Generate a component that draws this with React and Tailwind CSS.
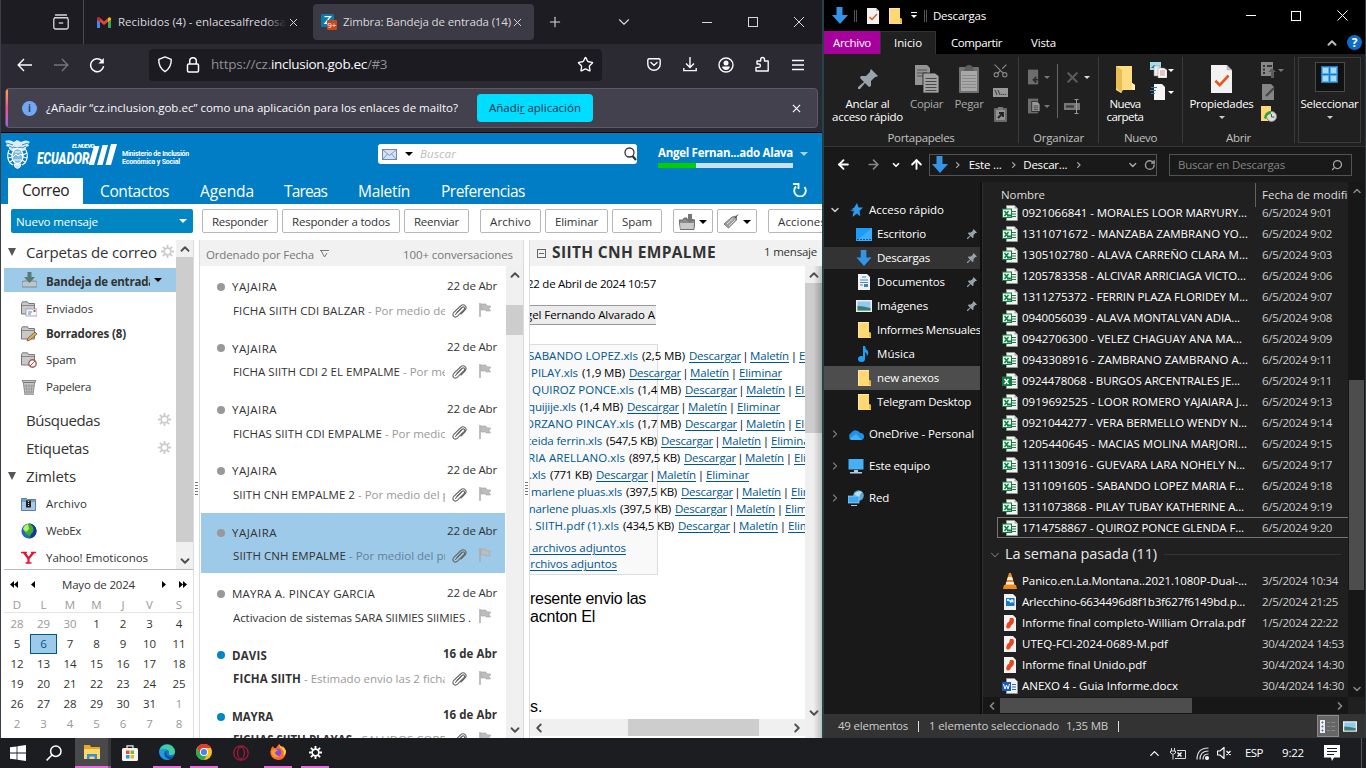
import React, { useLayoutEffect, useRef } from "react";
import { X, Plus, ChevronDown, ChevronUp, ChevronLeft, ChevronRight, ArrowLeft, ArrowRight, ArrowUp, RotateCw, Star, Search, Scissors } from "lucide-react";

/* One-line label whose tracking is adjusted so that it spans w pixels. */
function T({ w, className = "", children }) {
  const ref = useRef(null);
  useLayoutEffect(() => {
    const el = ref.current;
    if (!w || !el) return;
    el.style.letterSpacing = "0px";
    const n = el.textContent.length;
    el.style.letterSpacing = (w - el.getBoundingClientRect().width) / n + "px";
  }, [w, children]);
  return <span ref={ref} className={"inline-block shrink-0 whitespace-pre " + className}>{children}</span>;
}

const Tri = ({ className = "" }) => (
  <svg viewBox="0 0 8 4" className={"h-1 w-2 shrink-0 " + className}><path d="M0 0h8L4 4z" fill="currentColor" /></svg>
);
const SmallTri = ({ className = "" }) => (
  <svg viewBox="0 0 6 3" className={"h-[3px] w-[6px] shrink-0 " + className}><path d="M0 0h6L3 3z" fill="currentColor" /></svg>
);
const TreeTri = () => (
  <svg viewBox="0 0 8 8" className="ml-1 h-2 w-2 shrink-0"><path d="M0 0h8L4 8z" fill="#555" /></svg>
);
const Gear = ({ className = "" }) => (
  <svg viewBox="0 0 14 14" className={"shrink-0 " + className} fill="none" stroke="currentColor">
    <circle cx="7" cy="7" r="3.6" strokeWidth="1.8" />
    <path d="M7 0v3M7 11v3M0 7h3M11 7h3M2 2l2.200 2.200M9.800 9.800L12 12M12 2L9.800 4.200M4.200 9.800L2 12" strokeWidth="2" />
  </svg>
);

const DownArrow = ({ className = "" }) => (
  <svg viewBox="0 0 16 17" className={"h-[17px] w-4 shrink-0 " + className}><path d="M4.500 0h6v8H16l-8 9-8-9h4.500z" fill="#3495e8" /></svg>
);
const FolderIcon = ({ className = "" }) => (
  <svg viewBox="0 0 13 16" className={"h-4 w-[13px] shrink-0 " + className}>
    <path d="M0 0h11v10l2 1v5H0z" fill="#ffd874" /><path d="M0 0h11v1H1v14H0z" fill="#ffe9a8" /><path d="M11 10l2 1v4h-2z" fill="#e8b73c" />
  </svg>
);
const Pin = ({ className = "h-[11px] w-[11px]" }) => (
  <svg viewBox="0 0 20 20" className={"shrink-0 " + className}><path d="M13 0l7 7-2 1-1 0-4 4 0 5-2 1-4-4-5 6-2 0 0-2 6-5-4-4 1-2 5 0 4-4 0-1z" fill="#98a3ad" /></svg>
);

/* ---------- browser window ---------- */

function BrowserTabs() {
  return (
    <div className="flex h-11 shrink-0 items-center bg-[#1d1c23] text-[11.5px] text-[#d8d8dc]">
      <svg viewBox="0 0 16 16" className="ml-[52px] h-4 w-4 shrink-0" fill="none" stroke="#d8d8dc" strokeWidth="1.3">
        <path d="M2.500 1h11" strokeLinecap="round" /><path d="M1.200 3.700h13.600" /><rect x=".8" y="3.700" width="14.400" height="11.300" rx="1.800" /><path d="M5.800 9h4.400" />
      </svg>
      <div className="ml-[14px] h-11 w-px bg-[#4a4953]" />
      <svg viewBox="0 0 14 11" className="ml-[13px] h-[11px] w-[14px] shrink-0">
        <path d="M0 1v10h3V4z" fill="#4285f4" /><path d="M14 1v10h-3V4z" fill="#34a853" /><path d="M0 1.400Q.6-.3 2.400.6L7 4.400 11 1v3.800L7 8 3 4.800 0 2.600z" fill="#ea4335" /><path d="M11 1q2-1.700 3 .4v1.200l-3 2.300z" fill="#fbbc04" /><path d="M0 1.400Q.6-.3 3 1v3.800L0 2.600z" fill="#c5221f" />
      </svg>
      <div className="relative ml-[7px] w-[168px] overflow-hidden py-1">
        <T w={168}>Recibidos (4) - enlacesalfredosa</T>
        <div className="absolute inset-y-0 right-0 w-5 bg-linear-to-r from-[#1d1c23]/0 to-[#1d1c23]" />
      </div>
      <X className="ml-px h-[13px] w-[13px] shrink-0" strokeWidth={1.800} />
      <div className="ml-[13px] flex h-9 w-[221px] shrink-0 items-center rounded bg-[#3b3a45]">
        <svg viewBox="0 0 16 16" className="ml-2 h-4 w-4 shrink-0">
          <rect width="13" height="13" rx="1.500" fill="#0f79aa" /><path d="M3.500 2.700h6L4 9.300h3" fill="none" stroke="#dff" strokeWidth="1.300" />
          <rect x="6" y="6" width="10" height="10" rx="1" fill="#c3481c" />
          <text x="6.300" y="14" fontSize="8" fontFamily="Open Sans, sans-serif" fill="#fff">9+</text>
        </svg>
        <T w={168} className="ml-[6px]">Zimbra: Bandeja de entrada (14)</T>
        <X className="h-[13px] w-[13px] shrink-0" strokeWidth={1.800} />
      </div>
      <Plus className="ml-[13px] h-4 w-4 shrink-0" strokeWidth={1.600} />
      <ChevronDown className="ml-[52px] h-[18px] w-[18px] shrink-0" strokeWidth={1.500} />
      <div className="ml-[69px] h-px w-[10px] shrink-0 bg-[#d8d8dc]" />
      <div className="ml-9 h-[10px] w-[10px] shrink-0 border border-[#d8d8dc]" />
      <svg viewBox="0 0 10 10" className="ml-9 h-[10px] w-[10px] shrink-0" stroke="#d8d8dc"><path d="M0 0l10 10M10 0L0 10" /></svg>
    </div>
  );
}

function BrowserToolbar() {
  return (
    <div className="flex h-11 shrink-0 items-center bg-[#2b2a33] pb-[3px] text-[#fbfbfe]">
      <svg viewBox="0 0 16 14" className="ml-4 h-[14px] w-4 shrink-0" fill="none" stroke="#fbfbfe" strokeWidth="1.400"><path d="M15 7H1.500M7 1L1.200 7 7 13" /></svg>
      <svg viewBox="0 0 16 14" className="ml-5 h-[14px] w-4 shrink-0" fill="none" stroke="#75747c" strokeWidth="1.400"><path d="M1 7h13.500M9 1l5.800 6L9 13" /></svg>
      <svg viewBox="0 0 16 16" className="ml-5 h-4 w-4 shrink-0" fill="none" stroke="#fbfbfe" strokeWidth="1.500"><path d="M14.600 9.200A6.500 6.500 0 1 1 12.800 3.600" /><path d="M14.800 1v5.400H9.400z" fill="#fbfbfe" stroke="none" /></svg>
      <div className="ml-11 flex h-8 w-[453px] shrink-0 items-center rounded bg-[#1c1b22]">
        <svg viewBox="0 0 16 18" className="ml-2 h-[17px] w-4 shrink-0" fill="none" stroke="#fbfbfe" strokeWidth="1.500"><path d="M8 1L14.600 3.600Q15 12 8 16.600 1 12 1.400 3.600z" strokeLinejoin="round" /></svg>
        <svg viewBox="0 0 14 16" className="ml-[13px] h-4 w-[14px] shrink-0" fill="none" stroke="#fbfbfe" strokeWidth="1.500"><rect x="1.500" y="7" width="11" height="8" rx="1.200" /><path d="M3.700 7V4a3.300 3.300 0 0 1 6.600 0v3" /></svg>
        <div className="ml-[11px] flex text-[13.5px] text-[#8f8f96]">
          <T w={60}>https://cz.</T><T w={96} className="text-[#fbfbfe]">inclusion.gob.ec</T><T w={20}>/#3</T>
        </div>
        <Star className="ml-[190px] h-[17px] w-[17px] shrink-0" strokeWidth={1.900} />
      </div>
      <svg viewBox="0 0 14 13" className="ml-[45px] h-[13px] w-[14px] shrink-0" fill="none" stroke="#fbfbfe" strokeWidth="1.400"><path d="M2.200.8h9.600q1.400 0 1.400 1.400v4a6.200 6 0 0 1-12.400 0v-4Q.8.8 2.200.8z" /><path d="M4 4.600l3 2.800 3-2.800" strokeLinecap="round" /></svg>
      <svg viewBox="0 0 14 15" className="ml-[22px] h-[15px] w-[14px] shrink-0" fill="none" stroke="#fbfbfe" strokeWidth="1.400"><path d="M7 0v10M3 6.400l4 4 4-4M.8 11v2.600h12.400V11" /></svg>
      <svg viewBox="0 0 16 16" className="ml-[21px] h-4 w-4 shrink-0"><circle cx="8" cy="8" r="7" fill="none" stroke="#fbfbfe" strokeWidth="1.400" /><circle cx="8" cy="6" r="2.500" fill="#fbfbfe" /><path d="M4 9.500h8q-.6 3.400-4 3.500-3.400-.1-4-3.500z" fill="#fbfbfe" /></svg>
      <svg viewBox="0 0 14 16" className="-mt-[2px] ml-[21px] h-4 w-[14px] shrink-0" fill="none" stroke="#fbfbfe" strokeWidth="1.400" strokeLinejoin="round"><path d="M1 15h12.200V5H9.500V3.400a1.900 1.900 0 0 0-3.800 0V5H2v3h1.700a1.600 1.600 0 0 1 0 3.400H1z" /></svg>
      <svg viewBox="0 0 12 12" className="ml-[23px] h-3 w-3 shrink-0" stroke="#fbfbfe" strokeWidth="1.300"><path d="M0 1.500h12M0 6h12M0 10.500h12" /></svg>
    </div>
  );
}

function Notice() {
  return (
    <div className="h-[45px] shrink-0 border-b border-black bg-[#2b2a33] pr-[4px] pl-1">
      <div className="flex h-10 items-center overflow-hidden rounded border border-[#5b5a66] bg-[#42414d] text-[11.5px] text-[#fbfbfe]">
        <div className="h-10 w-[2px] shrink-0 bg-linear-to-b from-[#ffa436] via-[#ff3f8e] to-[#9059ff]" />
        <div className="ml-[14px] flex h-[15px] w-[15px] shrink-0 items-center justify-center rounded-full bg-[#73a7f3] text-[10px] font-bold text-[#33475f]">i</div>
        <T w={412} className="ml-[9px]">¿Añadir “cz.inclusion.gob.ec” como una aplicación para los enlaces de mailto?</T>
        <div className="ml-[19px] flex h-7 w-[116px] shrink-0 items-center justify-center rounded bg-[#00ddff] text-[#15304a]">
          <T w={92}>Añadi<u>r</u> aplicación</T>
        </div>
        <svg viewBox="0 0 10 10" className="ml-[199px] h-[9px] w-[9px]" stroke="#fbfbfe" strokeWidth="1.300"><path d="M1 1l8 8M9 1L1 9" /></svg>
      </div>
    </div>
  );
}

function Crest() {
  return (
    <svg viewBox="0 0 27 30" className="h-[30px] w-[27px] shrink-0" fill="none" stroke="#fff">
      <path d="M1 2q5-2 9 1l3-2 4 2q5-3 9 0l-2 2 1 2-3 1v3l-3 1H8L5 10V8L2 7l1-2z" fill="#dcedf8" stroke="none" />
      <path d="M3 4l6 2M24 4l-6 2M9 8l4 1 5-1M5 7l4 2M22 7l-4 2" stroke="#0a7abd" strokeWidth=".8" />
      <ellipse cx="13.500" cy="17" rx="5.500" ry="7.500" fill="#7bbbe2" strokeWidth="1.300" /><path d="M9 18l3-3 2 2 3-2 2 3M10 21h7M11 13h5" strokeWidth="1" />
      <path d="M5 11q-3 7 1 13l3 2M22 11q3 7-1 13l-3 2M4 14l4 2M4 19l4-1M23 14l-4 2M23 19l-4-1M6 23l3-2M21 23l-3-2" strokeWidth="1.200" /><path d="M10 25h7l-1 3-2.500 1.500L11 28z" fill="#cfe6f4" />
    </svg>
  );
}

const mailTabs = [
  ["Contactos", 69, "ml-[17px]"], ["Agenda", 54, "ml-[31px]"], ["Tareas", 43, "ml-[30px]"], ["Maletín", 52, "ml-[31px]"], ["Preferencias", 84, "ml-[31px]"],
];

function MailHeader() {
  return (
    <div className="h-[71px] shrink-0 bg-[#007dc4] text-white">
      <div className="flex h-[45px] items-center">
        <div className="-mt-[3px] ml-[3px] shrink-0"><Crest /></div>
        <div className="-mt-[3px] ml-[6px] w-[59px] shrink-0 font-[Roboto] leading-none font-black italic">
          <div className="flex h-[7px] justify-end pr-[2px] text-[6px] leading-[6px]"><T w={22}>EL NUEVO</T></div>
          <div className="h-[16px] text-[17px] leading-[16px]"><span className="inline-block origin-left scale-x-[0.7]">ECUADOR</span></div>
        </div>
        <svg viewBox="0 0 28 21" className="-mt-[2px] -ml-[7px] h-[21px] w-7 shrink-0" fill="#fff"><path d="M5 2h5.500L5 21H-.5zM13.500 1H19L13.500 21H8zM22 0h6l-6 21h-5.500z" /></svg>
        <div className="mt-[5px] ml-[5px] flex w-[69px] shrink-0 flex-col items-start font-[Roboto] text-[7px] leading-[8px] font-bold">
          <T w={67}>Ministerio de Inclusión</T><T w={58}>Económica y Social</T>
        </div>
        <div className="ml-[187px] -mt-[3px] flex h-5 w-[259px] shrink-0 items-center rounded-[3px] bg-white">
          <svg viewBox="0 0 15 11" className="ml-1 h-[11px] w-[15px] shrink-0"><rect x=".5" y=".5" width="14" height="10" fill="#d5e1f3" stroke="#6d87b0" /><path d="M1 1l6.500 5.500L14 1M1 10l4.500-5M14 10L9.500 5" fill="none" stroke="#7f9ac6" /></svg>
          <Tri className="ml-2 text-black" />
          <T w={36} className="ml-[7px] text-[11.5px] text-[#bbb] italic">Buscar</T>
          <svg viewBox="0 0 13 14" className="ml-[168px] h-[14px] w-[13px] shrink-0" fill="none" stroke="#333"><circle cx="5.500" cy="5.500" r="4.500" strokeWidth="1.300" /><path d="M8.500 9l3.500 4" strokeWidth="2.200" /></svg>
        </div>
        <div className="mt-[2px] ml-[21px] w-[135px] shrink-0">
          <div className="flex h-[18px]"><T w={135} className="text-[11.5px] leading-[16px] font-bold">Angel Fernan...ado Alava</T></div>
          <div className="flex h-[5px] bg-[#cbe1f1]"><div className="w-[38px] bg-[#00d000]" /></div>
        </div>
        <Tri className="-mt-[3px] ml-[7px] text-[#a8d6f0]" />
      </div>
      <div className="flex h-[26px] items-center text-[15.5px]">
        <div className="ml-[7px] flex h-[26px] w-[75px] shrink-0 items-center justify-center bg-white text-[#222]"><T w={47}>Correo</T></div>
        {mailTabs.map(([t, w, m]) => <T key={t} w={w} className={"pt-px " + m}>{t}</T>)}
        <svg viewBox="0 0 14 14" className="-mt-[2px] ml-[268px] h-[14px] w-[14px] shrink-0" fill="none" stroke="#fff" strokeWidth="1.800"><path d="M3 3.500A5.800 5.800 0 1 0 11.500 4" /><path d="M0 1h5.500v5" /></svg>
      </div>
    </div>
  );
}

const mailButtons = [
  ["Responder", 56, "w-[76px] ml-[9px]"], ["Responder a todos", 98, "w-[118px] ml-1"], ["Reenviar", 45, "w-[65px] ml-1"],
  ["Archivo", 41, "w-[61px] ml-[11px]"], ["Eliminar", 43, "w-[63px] ml-1"], ["Spam", 30, "w-[50px] ml-1"],
];

function MailToolbar() {
  const btn = "flex h-6 shrink-0 items-center justify-center rounded-[2px] border border-[#b7b7b7] bg-white pt-px ";
  return (
    <div className="flex h-9 shrink-0 items-start overflow-hidden bg-white pt-[5px] text-[11.5px] text-[#333]">
      <div className="ml-[10px] flex h-6 w-[182px] shrink-0 items-center justify-between rounded-[2px] bg-[#0087c3] px-[5px] text-white">
        <T w={82} className="pt-px">Nuevo mensaje</T><Tri className="mr-px" />
      </div>
      {mailButtons.map(([t, w, c]) => <div key={t} className={btn + c}><T w={w}>{t}</T></div>)}
      <div className={btn + "ml-[11px] w-10 gap-1 text-black"}>
        <svg viewBox="0 0 16 16" className="h-4 w-4"><path d="M0 6h4l1-2h3v2h8l-1 9.500H1.500z" fill="#8b8b8b" stroke="#555" strokeWidth=".8" /><path d="M1 9h14l-.5 6h-13z" fill="#c9c9c9" /><path d="M9 0h4v5h2.500L11 9 6.500 5H9z" fill="#777" /></svg>
        <Tri />
      </div>
      <div className={btn + "ml-1 w-10 gap-1 text-black"}>
        <svg viewBox="0 0 16 16" className="h-4 w-4"><path d="M1 10L9 3l4.500-1 0 4L5.500 14z" fill="#a0a0a0" stroke="#666" strokeWidth=".8" /><path d="M4 10l6-5.500M6 12l6-6" stroke="#ddd" /><path d="M12 4L15 .5" stroke="#444" /></svg>
        <Tri />
      </div>
      <div className={btn + "ml-[11px] w-[75px] justify-start! pl-[9px]"}><T w={48}>Acciones</T></div>
    </div>
  );
}

function FolderBase({ children }) {
  return (
    <svg viewBox="0 0 16 16" className="h-4 w-4 shrink-0">
      <path d="M.5 2.500V13h13V2.500H7.500L6.500.8H1.500z" fill="#c9c9c9" stroke="#777" /><path d="M1 4.500h12" stroke="#888" />{children}
    </svg>
  );
}
const folderIcons = {
  Enviados: <FolderBase><rect x="5" y="8" width="11" height="7" fill="#f4f7fb" stroke="#8f9bb0" strokeWidth=".8" /><path d="M7 11h4M7 13h3" stroke="#6e88b5" /><rect x="12.500" y="9" width="2" height="2" fill="#c55" /></FolderBase>,
  Borradores: <FolderBase><path d="M6 15l1-3 7-6 2 2-7 6z" fill="#dcae55" stroke="#76562b" strokeWidth=".8" /></FolderBase>,
  Spam: <FolderBase><circle cx="11.500" cy="11.500" r="3.700" fill="#fff" stroke="#ad5353" strokeWidth="1.400" /><path d="M9 14l5-5" stroke="#ad5353" /></FolderBase>,
  Papelera: <svg viewBox="0 0 16 16" className="h-4 w-4 shrink-0"><path d="M1 1.500h14l-1 2H2zM2.300 3.500h11.400L12 16H4z" fill="#c5c5c5" stroke="#777" strokeWidth=".8" /><path d="M5 5l1 10M8 5v10M11 5l-1 10M3 7h10M3.500 10h9M4 13h8" stroke="#8c8c8c" strokeWidth=".7" /></svg>,
  Archivo: <svg viewBox="0 0 15 14" className="h-[14px] w-[15px] shrink-0"><path d="M.5 1.500h5l1 1h8v11H.5z" fill="#78a0c8" stroke="#587fa8" /><path d="M1 5h13v8H1z" fill="#a8c8e6" /><rect x="5" y="3.500" width="5" height="7" fill="#222" /><path d="M7.500 4v6" stroke="#ddd" strokeDasharray="1 1" /></svg>,
  WebEx: <svg viewBox="0 0 16 16" className="h-4 w-4 shrink-0"><circle cx="8" cy="8" r="7.600" fill="#2369b8" /><path d="M8 .4a7.600 7.600 0 0 1 0 15.200q3-3 2-7.600Q9 3 8 .4z" fill="#123a9a" /><path d="M8 .4Q14 3 12 9l-4 4Q2 10 3 4z" fill="#45ad2c" /><path d="M7 1Q3 2 2 6l3 3 3-3z" fill="#b8f06a" /></svg>,
  Yahoo: <svg viewBox="0 0 15 13" className="h-[13px] w-[15px] shrink-0" fill="none" stroke="#e8112d"><path d="M3 1.500l4.500 6L12.500 1.500M7.500 7v5" strokeWidth="2.200" /><path d="M0 1.500h6M10 1.500h5M4.500 12h6" strokeWidth="1.300" /></svg>,
};

function FolderRow({ icon, text, w, className = "", bold }) {
  return (
    <div className={"flex shrink-0 items-center text-[11.5px] text-[#333] " + className}>
      <div className="ml-[17px] w-4 shrink-0">{folderIcons[icon]}</div>
      <T w={w} className={"ml-[9px] " + (bold ? "font-bold" : "")}>{text}</T>
    </div>
  );
}

const weeks = [
  [28, 29, 30, 1, 2, 3, 4], [5, 6, 7, 8, 9, 10, 11], [12, 13, 14, 15, 16, 17, 18], [19, 20, 21, 22, 23, 24, 25], [26, 27, 28, 29, 30, 31, 1], [2, 3, 4, 5, 6, 7, 8],
];
const calCols = "grid grid-cols-[26px_27px_26px_27px_26px_27px_32px] text-center ";

function Calendar() {
  return (
    <div className="h-[168px] shrink-0 overflow-hidden border-t border-[#b9b9b9] text-[11.5px]">
      <div className="flex h-7 items-center pt-px text-black">
        <svg viewBox="0 0 8 7" className="ml-[6px] h-[7px] w-2"><path d="M4 0v7L0 3.500zM8 0v7L4 3.500z" /></svg>
        <svg viewBox="0 0 4 7" className="ml-[13px] h-[7px] w-1"><path d="M4 0v7L0 3.500z" /></svg>
        <T w={73} className="ml-[27px] text-[#333]">Mayo de 2024</T>
        <svg viewBox="0 0 4 7" className="ml-[27px] h-[7px] w-1"><path d="M0 0v7l4-3.500z" /></svg>
        <svg viewBox="0 0 8 7" className="ml-[13px] h-[7px] w-2"><path d="M0 0v7l4-3.500zM4 0v7l4-3.500z" /></svg>
      </div>
      <div className={calCols + "h-[15px] border-b border-[#e4e4e4] leading-[13px] text-[#999]"}>
        {["D", "L", "M", "M", "J", "V", "S"].map((d, i) => <span key={i}>{d}</span>)}
      </div>
      <div className="pt-px">
        {weeks.map((wk, r) => (
          <div key={r} className={calCols + "h-5 leading-[20px] tracking-[-0.2px]"}>
            {wk.map((d, c) => {
              const off = (r === 0 && d > 20) || r === 5 || (r === 4 && d === 1);
              const sel = r === 1 && d === 6;
              return <span key={c} className={sel ? "h-5 border border-[#00578f] bg-[#9ccae8] leading-[18px] text-[#00578f]" : off ? "text-[#999]" : "text-[#333]"}>{d}</span>;
            })}
          </div>
        ))}
      </div>
    </div>
  );
}

const ScrollArrow = ({ as: As = ChevronUp }) => (
  <div className="flex h-[17px] w-[17px] shrink-0 items-center justify-center text-[#505050]"><As className="h-[14px] w-[14px]" strokeWidth={3.200} /></div>
);

function Sidebar() {
  return (
    <div className="ml-[3px] flex w-[190px] shrink-0 flex-col border-r border-[#dcdcdc]">
      <div className="flex h-[329px] shrink-0">
        <div className="flex w-[172px] shrink-0 flex-col overflow-hidden text-[#333]">
          <div className="flex h-[28px] shrink-0 items-center pb-[4px]">
            <TreeTri /><T w={131} className="ml-[10px] text-[15px]">Carpetas de correo</T><Gear className="-mt-[2px] ml-[4px] h-[13px] w-[13px] text-[#ccc]" />
          </div>
          <div className="flex h-6 shrink-0 items-center bg-[#9ccae8] text-[11.5px]">
            <svg viewBox="0 0 15 16" className="ml-[18px] h-4 w-[15px]"><path d="M0 10l2-1h11l2 1v5H0z" fill="#bcc5cc" stroke="#6e7b85" strokeWidth=".8" /><path d="M5.500 0h4v5H13l-5.500 6L2 5h3.500z" fill="#567c72" /></svg>
            <div className="ml-[9px] w-[104px] overflow-hidden pt-[5px] pb-[2px]"><T w={109} className="font-bold">Bandeja de entrada</T></div><Tri className="ml-1 text-black" />
          </div>
          <FolderRow icon="Enviados" text="Enviados" w={47} className="mt-[4px] h-[26px]" />
          <FolderRow icon="Borradores" text="Borradores (8)" w={80} bold className="h-6" />
          <FolderRow icon="Spam" text="Spam" w={30} className="h-7" />
          <FolderRow icon="Papelera" text="Papelera" w={45} className="h-[26px]" />
          <div className="mt-[6px] flex h-[28px] shrink-0 items-center"><T w={74} className="ml-[22px] text-[15px]">Búsquedas</T><Gear className="-mt-[2px] ml-[58px] h-[13px] w-[13px] text-[#ccc]" /></div>
          <div className="flex h-7 shrink-0 items-center"><T w={63} className="ml-[22px] text-[15px]">Etiquetas</T><Gear className="-mt-[2px] ml-[69px] h-[13px] w-[13px] text-[#ccc]" /></div>
          <div className="flex h-[28px] shrink-0 items-center"><TreeTri /><T w={50} className="ml-[10px] text-[15px]">Zimlets</T></div>
          <FolderRow icon="Archivo" text="Archivo" w={41} className="h-[27px]" />
          <FolderRow icon="WebEx" text="WebEx" w={35} className="h-[27px]" />
          <FolderRow icon="Yahoo" text="Yahoo! Emoticonos" w={102} className="h-[27px]" />
        </div>
        <div className="flex w-[17px] flex-col bg-[#f0f0f0]"><ScrollArrow /><div className="h-[285px] bg-[#cdcdcd]" /><div className="mt-[10px]"><ScrollArrow as={ChevronDown} /></div></div>
      </div>
      <Calendar />
    </div>
  );
}

const Grip = () => (
  <div className="flex w-[6px] shrink-0 flex-col items-center gap-[2px] border-r border-[#dcdcdc] pt-[242px]">
    {[0, 1, 2, 3, 4].map((i) => <div key={i} className="h-px w-[3px] shrink-0 bg-[#777]" />)}
  </div>
);

const mails = [
  ["YAJAIRA", 45, "22 de Abr", "FICHA SIITH CDI BALZAR", 132, "Por medio de la presente"],
  ["YAJAIRA", 45, "22 de Abr", "FICHA SIITH CDI 2 EL EMPALME", 167, "Por medio de la presente"],
  ["YAJAIRA", 45, "22 de Abr", "FICHAS SIITH CDI EMPALME", 149, "Por medio de la presente"],
  ["YAJAIRA", 45, "22 de Abr", "SIITH CNH EMPALME 2", 122, "Por medio del presente"],
  ["YAJAIRA", 45, "22 de Abr", "SIITH CNH EMPALME", 113, "Por mediol del presente"],
  ["MAYRA A. PINCAY GARCIA", 143, "22 de Abr", "Activacion de sistemas SARA SIIMIES SIIMIES .", 238, ""],
  ["DAVIS", 35, "16 de Abr", "FICHA SIITH", 68, "Estimado envio las 2 fichas"],
  ["MAYRA", 41, "16 de Abr", "FICHAS SIITH PLAYAS", 119, "SALUDOS CORDIALES"],
];

const Flag = () => (
  <svg viewBox="0 0 12 14" className="-mt-[2px] h-[14px] w-3 shrink-0"><path d="M1 0v14" stroke="#aaa" strokeWidth="1.500" /><path d="M2 1h5v1.500l5 .7-2 2.300 1.500 2.500H7V7H2z" fill="#bdbdbd" stroke="#a5a5a5" strokeWidth=".6" /></svg>
);
const Clip = () => (
  <svg viewBox="0 0 15 14" className="mr-[12px] ml-[7px] h-[14px] w-[15px] shrink-0" fill="none" stroke="#666" strokeWidth="1.100" strokeLinecap="round">
    <path d="M3.500 10.500L10 3.500q1.300-1.200 2.300-.2t-.3 2.400l-6.500 6.500q-2 1.700-3.700.2t-.2-3.700L8.500 2q2.500-2.200 4.600-.4t0 4.400L9 10" />
    <path d="M5 8.500L9.500 4" />
  </svg>
);

function MailList() {
  return (
    <div className="flex w-[324px] shrink-0 flex-col border-r border-[#dcdcdc]">
      <div className="flex h-[26px] shrink-0 items-center bg-[#f1f1f1] pt-[4px] text-[11.5px] text-[#777]">
        <T w={108} className="ml-[6px]">Ordenado por Fecha</T>
        <svg viewBox="0 0 9 8" className="-mt-[2px] ml-[6px] h-2 w-[9px]" fill="none" stroke="#777"><path d="M0 .5h9M1 .5l3.500 6.500L7 3" /></svg>
        <T w={110} className="ml-[74px]">100+ conversaciones</T>
      </div>
      <div className="flex h-[472px]">
        <div className="w-[305px] shrink-0 overflow-hidden pt-px">
          {mails.map(([name, nw, date, subj, sw, snip], i) => {
            const unread = i > 5;
            return (
              <div key={i} className="h-[61.400px]">
                <div className={"ml-px h-[60px] w-[304px] text-[11.5px] text-[#333] " + (i === 4 ? "bg-[#9ccae8]" : "")}>
                  <div className={"flex h-[33px] items-center pt-[7px] " + (unread ? "font-bold" : "")}>
                    <div className={"ml-4 h-2 w-2 shrink-0 rounded-full " + (unread ? "bg-[#0087c3]" : "bg-[#999]")} />
                    <T w={nw} className="ml-[7px]">{name}</T>
                    <T w={unread ? 54 : 50} className="mr-[8px] -mt-[3px] ml-auto">{date}</T>
                  </div>
                  <div className="flex h-[21px] items-center">
                    <div className={"ml-8 flex h-5 items-center overflow-hidden " + (snip ? "w-[212px]" : "w-[240px]")}>
                      <T w={sw} className={unread ? "font-bold" : ""}>{subj}</T>
                      {snip && <span className={"shrink-0 whitespace-pre " + (i === 4 ? "text-[#64829b]" : "text-[#999]")}> - {snip}</span>}
                    </div>
                    {snip ? <Clip /> : <div className="w-[6px]" />}
                    <Flag />
                  </div>
                </div>
              </div>
            );
          })}
        </div>
        <div className="ml-px flex w-[17px] flex-col bg-[#f0f0f0]"><ScrollArrow /><div className="mt-[22px] h-[30px] bg-[#cdcdcd]" /><div className="mt-auto"><ScrollArrow as={ChevronDown} /></div></div>
      </div>
    </div>
  );
}

const files = [
  ["SABANDO LOPEZ.xls", 110, "w-[108px]", "(2,5 MB)", 43], ["PILAY.xls", 47, "w-[48px]", "(1,9 MB)", 43], ["QUIROZ PONCE.xls", 102, "w-[104px]", "(1,4 MB)", 43],
  ["quijije.xls", 48, "w-[46px]", "(1,4 MB)", 43], ["ORZANO PINCAY.xls", 109, "w-[104px]", "(1,7 MB)", 43], ["ceida ferrin.xls", 76, "w-[72px]", "(547,5 KB)", 51],
  ["RIA ARELLANO.xls", 97, "w-[95px]", "(897,5 KB)", 51], [".xls", 17, "w-[16px]", "(771 KB)", 42], ["marlene pluas.xls", 91, "w-[92px]", "(397,5 KB)", 51],
  ["marlene pluas.xls", 91, "w-[86px]", "(397,5 KB)", 51], [". SIITH.pdf (1).xls", 90, "w-[89px]", "(434,5 KB)", 51],
];

function ReadingPane() {
  return (
    <div className="flex w-[292px] shrink-0 flex-col text-[11.5px]">
      <div className="flex h-[26px] shrink-0 items-center bg-[#f1f1f1] text-[#333]">
        <div className="ml-[7px] flex h-[9px] w-[9px] shrink-0 items-center justify-center border border-[#666]"><div className="h-px w-[5px] bg-[#666]" /></div>
        <T w={164} className="ml-[6px] text-[15.5px] font-bold">SIITH CNH EMPALME</T>
        <T w={53} className="-mt-[2px] ml-[48px]">1 mensaje</T>
      </div>
      <div className="flex h-[472px]">
        <div className="flex w-[275px] shrink-0 flex-col overflow-hidden text-black">
          <div className="flex h-[39px] w-[126px] shrink-0 items-center justify-end overflow-hidden pb-[3px]"><T w={129}>22 de Abril de 2024 10:57</T></div>
          <div className="flex h-5 w-[126px] shrink-0 items-center justify-end overflow-hidden border-y border-[#999] bg-[#ececec] pr-px"><T w={129}>gel Fernando Alvarado A</T></div>
          <div className="mt-[19px] h-[231px] w-[128px] shrink-0 border-y border-r border-[#dcdcdc] bg-[#f9f9f9] pt-[2px]">
            {files.map(([n, nw, c, s, w], i) => (
              <div key={i} className="flex h-[17px] w-max items-center leading-4 text-[#00578f]">
                <div className={"flex shrink-0 justify-end overflow-hidden " + c}><T w={nw}>{n}</T></div>
                <T w={w} className="ml-1 text-black">{s}</T>
                <T w={52} className="ml-[4px] underline underline-offset-2">Descargar</T><span className="w-[9px] text-center text-black">|</span>
                <T w={39} className="underline underline-offset-2">Maletín</T><span className="w-[10px] text-center text-black">|</span>
                <T w={43} className="underline underline-offset-2">Eliminar</T>
              </div>
            ))}
            <div className="mt-[6px] flex h-4 w-[96px] items-center justify-end overflow-hidden leading-4 text-[#00578f]"><T w={97} className="underline underline-offset-2"> archivos adjuntos</T></div>
            <div className="flex h-4 w-[87px] items-center justify-end overflow-hidden leading-4 text-[#00578f]"><T w={93} className="underline underline-offset-2">archivos adjuntos</T></div>
          </div>
          <div className="mt-[15px] h-[129px] shrink-0 font-['Liberation_Sans'] text-[16px] leading-[17.500px]">
            <div><T w={116}>resente envio las</T></div><div><T w={65}>acnton El</T></div><div className="mt-[73px]">s.</div>
          </div>
          <div className="flex h-[17px] shrink-0 bg-[#f0f0f0]"><ScrollArrow as={ChevronLeft} /><div className="ml-[81px] h-[17px] w-[131px] bg-[#cdcdcd]" /><div className="ml-auto"><ScrollArrow as={ChevronRight} /></div></div>
        </div>
        <div className="flex w-[17px] flex-col bg-linear-to-r from-[#efefef] from-50% to-[#bfbfbf]"><ScrollArrow /><div className="h-[150px] bg-linear-to-r from-[#cdcdcd] from-50% to-[#9e9e9e]" /><div className="mt-auto mb-[17px]"><ScrollArrow as={ChevronDown} /></div></div>
      </div>
    </div>
  );
}

function Browser() {
  return (
    <div className="flex w-[822px] shrink-0 flex-col overflow-hidden border-l border-[#3a3f4a] bg-white">
      <BrowserTabs /><BrowserToolbar /><Notice /><MailHeader /><MailToolbar />
      <div className="flex h-[498px] shrink-0"><Sidebar /><Grip /><MailList /><Grip /><ReadingPane /></div>
    </div>
  );
}

/* ---------- file explorer ---------- */

const CheckDoc = ({ className = "" }) => (
  <svg viewBox="0 0 12 16" className={"shrink-0 " + className}><path d="M0 0h9l3 3v13H0z" fill="#f2f2f2" /><path d="M9 0v3h3z" fill="#bbb" /><path d="M2.500 9l2.500 2.500L10 6" fill="none" stroke="#e8581c" strokeWidth="1.500" /></svg>
);

function ExplorerTop() {
  return (
    <>
      <div className="flex h-[31px] shrink-0 items-center bg-black text-[11.5px] text-white">
        <DownArrow className="ml-2" /><div className="ml-[6px] h-3 w-[3px] border-x border-[#555]" />
        <CheckDoc className="ml-[10px] h-4 w-3" /><FolderIcon className="ml-[10px]" />
        <svg viewBox="0 0 8 7" className="ml-2 h-[7px] w-2" fill="#fff"><path d="M1 0h6v1H1zM1 3h6L4 6z" /></svg>
        <div className="ml-[6px] h-3 w-[3px] border-x border-[#555]" /><T w={53} className="ml-[6px]">Descargas</T>
        <div className="ml-[260px] h-px w-[10px] shrink-0 bg-white" /><div className="ml-[35px] h-[10px] w-[10px] shrink-0 border border-white" />
        <svg viewBox="0 0 11 11" className="ml-9 h-[11px] w-[11px]" stroke="#fff"><path d="M.5.5l10 10M10.500.5l-10 10" /></svg>
      </div>
      <div className="flex h-[23px] shrink-0 items-center bg-black text-[11.5px] text-white">
        <div className="flex h-[23px] w-14 items-center justify-center bg-[#a8009c]"><T w={38}>Archivo</T></div>
        <div className="flex h-[23px] w-14 items-center justify-center border-x border-t border-[#333] bg-[#202020]"><T w={28}>Inicio</T></div>
        <T w={51} className="ml-[15px]">Compartir</T><T w={25} className="ml-[29px]">Vista</T>
        <ChevronUp className="ml-[269px] h-[14px] w-[14px] text-[#bbb]" strokeWidth={3.500} />
        <div className="ml-[8px] flex h-[15px] w-[15px] items-center justify-center rounded-full bg-[#0f6cc6] text-[12px] font-bold">?</div>
      </div>
    </>
  );
}

const Group = ({ label, w, className, children }) => (
  <div className={"flex h-[86px] shrink-0 flex-col border-r border-[#3a3a3a] " + className}>
    <div className="flex h-[71px] shrink-0">{children}</div>
    <div className="flex h-[19px] shrink-0 items-center justify-center text-[#c0c0c0]"><T w={w}>{label}</T></div>
  </div>
);
const Big = ({ icon, lines, className = "" }) => (
  <div className={"flex shrink-0 flex-col items-center " + className}>
    <div className="flex h-[40px] items-center pt-2 pb-1">{icon}</div>
    {lines.map(([t, w]) => t === "" ? <SmallTri key="tri" className="mt-[6px] text-[#ccc]" /> : <T key={t} w={w} className="h-[13px] leading-[14px]">{t}</T>)}
  </div>
);

function Ribbon() {
  return (
    <div className="flex h-[93px] shrink-0 items-start border-b border-[#333] bg-[#202020] pt-[3px] text-[11.5px] text-white">
      <Group label="Portapapeles" w={67} className="w-[195px]">
        <Big className="ml-2 w-[71px]" icon={<Pin className="h-[22px] w-[20px]" />} lines={[["Anclar al", 44], ["acceso rápido", 71]]} />
        <Big className="ml-[7px] w-[33px] text-[#aaa]" lines={[["Copiar", 33]]} icon={
          <svg viewBox="0 0 24 28" className="h-7 w-6 shrink-0"><path d="M0 0h12l3 3v17H0z" fill="#949494" /><path d="M2 5h10M2 8h10M2 11h6" stroke="#505050" /><path d="M8 8h12l4 3v17H8z" fill="#a3a3a3" stroke="#202020" strokeWidth=".8" /><path d="M10.500 13.500h11M10.500 16.500h11M10.500 19.500h11M10.500 22.500h11M10.500 25.500h11" stroke="#484848" /></svg>} />
        <Big className="ml-[11px] w-[30px] text-[#aaa]" lines={[["Pegar", 29]]} icon={
          <svg viewBox="0 0 24 28" className="h-7 w-6 shrink-0"><rect x="2" y="2" width="20" height="26" rx="1" fill="#717171" /><rect x="4" y="6" width="16" height="20" fill="#a8a8a8" /><path d="M8 2q4-4 8 0l1 4H7z" fill="#5d5d5d" /><path d="M5 10.500h14M5 13.500h14M5 16.500h14M5 19.500h14M5 22.500h14" stroke="#8a8a8a" /></svg>} />
        <div className="ml-[8px] flex w-[17px] flex-col items-center pt-[5px]">
          <Scissors className="h-[17px] w-[17px] -rotate-90 text-[#858585]" strokeWidth={1.600} />
          <div className="mt-[9px] flex h-[9px] w-[15px] items-center justify-center bg-[#999] text-[7px] font-bold text-[#333]">\\...</div>
          <svg viewBox="0 0 13 15" className="mt-[10px] h-[15px] w-[13px]"><rect y="1" width="13" height="14" rx="1" fill="#696969" /><path d="M2 3h9v10H2z" fill="#929292" /><path d="M4 0h5v3H4z" fill="#777" /><path d="M4 11l4-4M5 6h4v4" stroke="#202020" strokeWidth="1.800" fill="none" /></svg>
        </div>
      </Group>
      <Group label="Organizar" w={51} className="w-[80px]">
        <div className="ml-[9px] flex w-[22px] flex-col gap-[13px] pt-[12px]">
          <div className="flex items-center gap-1 text-[#777]"><svg viewBox="0 0 13 16" className="h-4 w-[13px]"><path d="M0 0h11v16H0z" fill="#6d6d6d" /><path d="M13 11H6M9 8l-3 3 3 3" stroke="#2a2a2a" strokeWidth="1.800" fill="none" /></svg><SmallTri /></div>
          <div className="flex items-center gap-1 text-[#777]"><svg viewBox="0 0 13 16" className="h-4 w-[13px]"><path d="M0 0h11v16H0z" fill="#6d6d6d" /><path d="M4 3h6l3 3v8H4z" fill="#999" stroke="#2a2a2a" /><path d="M6 8h5M6 10h5M6 12h5" stroke="#444" /></svg><SmallTri /></div>
        </div>
        <div className="mt-[7px] ml-[7px] h-[54px] w-px bg-[#666]" />
        <div className="ml-[6px] flex flex-col gap-[13px] pt-[12px]">
          <div className="flex items-center gap-[3px]"><X className="h-[17px] w-[17px] text-[#5a5a5a]" strokeWidth={3} /><SmallTri className="text-[#ddd]" /></div>
          <svg viewBox="0 0 16 16" className="h-4 w-4"><path d="M0 4h16v7H0z" fill="#777" /><path d="M2 6.500h8v2H2z" fill="#333" /><path d="M12.500 1v13M10.500.5h4M10.500 14.500h4" stroke="#999" /></svg>
        </div>
      </Group>
      <Group label="Nuevo" w={33} className="w-[84px]">
        <Big className="ml-[6px] w-[40px]" lines={[["Nueva", 31], ["carpeta", 37]]} icon={
          <svg viewBox="0 0 19 27" className="h-[27px] w-[19px]"><path d="M0 0h16v17l3 2v5H7l-2 3-5-3z" fill="#ffdc80" /><path d="M0 0l6 4v23l-6-5z" fill="#e9bd55" /><path d="M16 17l3 2v5h-3z" fill="#fff0bd" /></svg>} />
        <div className="ml-[5px] flex flex-col gap-[6px] pt-[5px]">
          <div className="flex items-center gap-px"><svg viewBox="0 0 17 16" className="h-4 w-[17px]"><rect width="11" height="8" fill="#a7dcf0" /><path d="M1 6l3-3 4 3z" fill="#31709a" /><path d="M4 4h6v10H4z" fill="#eee" stroke="#888" strokeWidth=".5" /><path d="M8 6h6l3 2v8H8z" fill="#fff" stroke="#888" strokeWidth=".5" /><path d="M10 9h5M10 11h5M10 13h5" stroke="#c88" /></svg><SmallTri /></div>
          <div className="flex items-center gap-px"><svg viewBox="0 0 17 16" className="h-4 w-[17px]"><path d="M4 0h8l3 3v13H4z" fill="#f5f5f5" /><path d="M1 3.500h6M0 6.500h6M1 9.500h4" stroke="#2a7bc0" /></svg><SmallTri /></div>
        </div>
      </Group>
      <Group label="Abrir" w={25} className="w-[112px]">
        <Big className="ml-[6px] w-[65px]" lines={[["Propiedades", 64], ["", 0]]} icon={<CheckDoc className="h-[28px] w-[21px]" />} />
        <div className="ml-[6px] flex flex-col gap-[6px] pt-[5px]">
          <div className="flex items-center gap-px text-[#777]"><svg viewBox="0 0 17 16" className="h-4 w-[17px]"><path d="M1 0h12v14H1z" fill="#888" /><path d="M3 3h2v2H3zM3 6.500h2v2H3zM3 10h2v2H3zM7 3h5v2H7z" fill="#333" /><path d="M11 16v-6H8l4-4 4 4h-2v6z" fill="#5d5d5d" /></svg><SmallTri /></div>
          <svg viewBox="0 0 17 16" className="h-4 w-[17px]"><path d="M2 0h9l3 3v13H2z" fill="#858585" /><path d="M6 12l8-8" stroke="#444" strokeWidth="2" /></svg>
          <svg viewBox="0 0 17 16" className="h-4 w-[17px]"><path d="M1 0h10v15H1z" fill="#ffd874" /><circle cx="11.500" cy="10.500" r="5" fill="#ddd" stroke="#888" /><path d="M4 12q1-7 7-7v3q-4 0-5 5z" fill="#2ea43a" /><path d="M11.500 8v3h3" stroke="#555" fill="none" /></svg>
        </div>
      </Group>
      <div className="ml-[3px] flex h-[86px] w-[63px] shrink-0 flex-col items-center border border-[#3a3a3a] pt-[4px]">
        <div className="flex h-[30px] w-[30px] shrink-0 items-center justify-center border border-[#4b4b4b] bg-[#111]">
          <div className="mb-[6px] grid grid-cols-2 gap-px bg-[#2579bb] p-px">{[0, 1, 2, 3].map((i) => <div key={i} className="h-[7px] w-[7px] border border-[#4db2f7] bg-[#a7dcff]" />)}</div>
        </div>
        <T w={58} className="mt-[5px] leading-[14px]">Seleccionar</T><SmallTri className="mt-[5px] text-[#ccc]" />
      </div>
    </div>
  );
}

function AddressBar() {
  return (
    <div className="flex h-[35px] shrink-0 items-center bg-[#191919] text-[11.5px] text-white">
      <ArrowLeft className="ml-3 h-[15px] w-[15px] shrink-0" strokeWidth={3} /><ArrowRight className="ml-[15px] h-[15px] w-[15px] shrink-0 text-[#888]" strokeWidth={2.500} />
      <ChevronDown className="ml-[10px] h-[10px] w-[10px] shrink-0" strokeWidth={4} /><ArrowUp className="ml-[8px] h-[15px] w-[15px] shrink-0" strokeWidth={3} />
      <div className="ml-[5px] flex h-[22px] w-[228px] shrink-0 items-center border border-[#535353]">
        <DownArrow className="ml-[2px]" /><ChevronRight className="ml-[5px] h-[10px] w-[10px] text-[#aaa]" strokeWidth={3} />
        <T w={33} className="ml-[6px]">Este ...</T><ChevronRight className="ml-[7px] h-[10px] w-[10px] text-[#aaa]" strokeWidth={3} />
        <T w={44} className="ml-[5px]">Descar...</T><ChevronRight className="ml-[7px] h-[10px] w-[10px] text-[#aaa]" strokeWidth={3} />
        <ChevronDown className="ml-[43px] h-3 w-3 text-[#aaa]" strokeWidth={3} /><RotateCw className="ml-[6px] h-3 w-3 text-[#999]" strokeWidth={3} />
      </div>
      <div className="ml-3 flex h-[22px] w-[183px] items-center justify-between border border-[#535353] px-2 text-[#838383]"><T w={107}>Buscar en Descargas</T><Search className="h-3 w-3 scale-x-[-1] text-[#aaa]" strokeWidth={2.500} /></div>
    </div>
  );
}

const navIcons = {
  star: <svg viewBox="0 0 16 16" className="h-[14px] w-4"><path d="M9 0l2 5h5l-4 4 1 6-4-3-5 4 1-6-4-2 5-3z" fill="#2b9df0" /><path d="M0 7l5 1M2 12l4-2" stroke="#191919" /></svg>,
  desk: <svg viewBox="0 0 16 13" className="h-[13px] w-4"><rect width="16" height="13" fill="#1d9bf8" /><path d="M0 13L16 0v13z" fill="#3cadfb" /><path d="M1 11.500h14" stroke="#0c5ea8" strokeDasharray="2 1" /></svg>,
  down: <DownArrow className="h-4!" />,
  doc: <svg viewBox="0 0 12 16" className="mx-auto h-4 w-3"><path d="M0 0h9l3 3v13H0z" fill="#f2f2f2" /><path d="M4 3h4M2 6h8M2 8.500h8M2 11h3" stroke="#3c8dcf" /><path d="M6 10h4v3H6z" fill="#4a7fa5" /></svg>,
  img: <svg viewBox="0 0 16 12" className="h-3 w-4"><rect width="16" height="12" fill="#eee" /><rect x="1.500" y="1.500" width="13" height="9" fill="#8fcbee" /><path d="M1.500 6q5 0 13 2v2.500h-13z" fill="#3e7d6c" /></svg>,
  fold: <FolderIcon className="ml-[2px]" />,
  music: <svg viewBox="0 0 11 16" className="ml-[2px] h-4 w-[11px]" fill="#1fa0f5"><ellipse cx="3.500" cy="13" rx="3.500" ry="3" /><path d="M5 0h2q0 3 3 5 1 3-1 5 0-3-2-4v7H5z" /></svg>,
  cloud: <svg viewBox="0 0 16 11" className="h-[11px] w-4"><path d="M4 11a4 4 0 0 1-.5-7.500A5 5 0 0 1 12 4a3.500 3.500 0 0 1 1 7z" fill="#2390e8" /><path d="M1 10l7-5 6 6H4z" fill="#3fb2f8" /></svg>,
  pc: <svg viewBox="0 0 16 15" className="h-[15px] w-4"><rect x=".5" width="15" height="10.500" fill="#45b0f5" /><path d="M6 11h4v2H6zM2 13h12v1.500H2z" fill="#bcc8d2" /></svg>,
  net: <svg viewBox="0 0 16 16" className="h-4 w-4"><circle cx="10.500" cy="5.500" r="5.300" fill="#5fa7cf" /><path d="M6 4q4-4 8-2-2 2-3 5z" fill="#b7dff2" /><rect y="6" width="11" height="7" fill="#3ca9f4" stroke="#c3e5fb" strokeWidth=".6" /><path d="M3 15h6v1H3z" fill="#bcc8d2" /></svg>,
};
const nav = [
  ["star", "Acceso rápido", 75, 0, ""], ["desk", "Escritorio", 49, 1, "pin"], ["down", "Descargas", 53, 1, "pin"], ["doc", "Documentos", 68, 1, "pin"], ["img", "Imágenes", 51, 1, "pin"],
  ["fold", "Informes Mensuales", 104, 1, ""], ["music", "Música", 38, 1, ""], ["fold", "new anexos", 62, 1, ""], ["fold", "Telegram Desktop", 94, 1, ""],
  ["cloud", "OneDrive - Personal", 105, 0, ""], ["pc", "Este equipo", 61, 0, ""], ["net", "Red", 20, 0, ""],
];

function NavPane() {
  return (
    <div className="w-[156px] shrink-0 overflow-hidden bg-[#191919] pt-4 text-[11.5px] text-white">
      {nav.map(([ic, t, w, sub, pin], i) => (
        <div key={t} className={"flex h-6 items-center overflow-hidden " + (i > 8 ? "mt-2 " : "") + (i === 2 ? "border-y border-[#191919] bg-[#333]" : i === 7 ? "bg-[#4d4d4d]" : "")}>
          {!sub && (i === 0 ? <ChevronDown className="ml-[5px] h-3 w-3 shrink-0 text-[#ccc]" strokeWidth={3} /> : <ChevronRight className="ml-[5px] h-3 w-3 shrink-0 text-[#777]" strokeWidth={2.500} />)}
          <div className={"w-4 shrink-0 " + (sub ? "ml-8" : "ml-[7px]")}>{navIcons[ic]}</div>
          <T w={w} className="ml-[5px]">{t}</T>
          {pin && <Pin className="mr-[3px] ml-auto h-[10px] w-[10px]" />}
        </div>
      ))}
    </div>
  );
}

const Xls = ({ solid }) => (
  <svg viewBox="0 0 16 16" className="h-4 w-4"><path d="M4.500.5h8l3 3v12h-11z" fill="#f3f3f3" stroke="#999" strokeWidth=".8" /><path d="M12.500.5v3h3z" fill="#aaa" /><path d="M10 6.500h4M10 9h4M10 11.500h4" stroke="#1d7f48" />
    <rect x=".5" y="4" width="9" height="8.500" fill={solid ? "#107c41" : "#e9f4ed"} stroke="#107c41" /><path d="M2.500 6l4 5M6.500 6l-4 5" stroke={solid ? "#fff" : "#107c41"} strokeWidth="1.400" />{!solid && <path d="M5 10.500h4" stroke="#107c41" strokeWidth="2" />}</svg>
);
const fileIcons = {
  x: <Xls />, X: <Xls solid />,
  vlc: <svg viewBox="0 0 14 16" className="mx-auto h-4 w-[14px]"><path d="M1 12h12l1 4H0z" fill="#f08a12" /><path d="M6 0h2l4 13q-5 2-10 0z" fill="#f28c18" /><path d="M5 4h4l1 3H4zM3.500 9h7l.7 2.500H2.800z" fill="#eee" /></svg>,
  png: <svg viewBox="0 0 12 16" className="mx-auto h-4 w-3"><path d="M0 0h9l3 3v13H0z" fill="#f2f2f2" /><rect x="2" y="4" width="8.500" height="8" fill="#1877d0" /><path d="M3 5h2l1 1.500L8 5l1.500 1v3L8 8 6.500 9 5 7H3z" fill="#e3f1fc" /></svg>,
  pdf: <svg viewBox="0 0 12 16" className="mx-auto h-4 w-3"><path d="M0 0h9l3 3v13H0z" fill="#f2f2f2" /><path d="M6 3h3q1.500 1 .8 4T7 10.500Q6.500 13.500 4 13.500T2.500 10 5 7z" fill="#e8451f" /></svg>,
  doc: <svg viewBox="0 0 16 16" className="h-4 w-4"><path d="M4.500.5h8l3 3v12h-11z" fill="#f3f3f3" stroke="#999" strokeWidth=".8" /><path d="M10 6.500h4M10 9h4M10 11.500h4" stroke="#2b6fc4" /><rect y="4" width="9" height="9" fill="#185abd" /><path d="M1.500 6l1.500 5 1.500-4L6 11l1.500-5" fill="none" stroke="#fff" /></svg>,
};
const today = [
  ["0921066841 - MORALES LOOR MARYURY...", 225, "9:01"], ["1311071672 - MANZABA ZAMBRANO YO...", 226, "9:02"], ["1305102780 - ALAVA CARREÑO CLARA M...", 226, "9:03"],
  ["1205783358 - ALCIVAR ARRICIAGA VICTO...", 224, "9:06"], ["1311275372 - FERRIN PLAZA FLORIDEY M...", 226, "9:07"], ["0940056039 - ALAVA MONTALVAN ADIA...", 218, "9:08"],
  ["0942706300 - VELEZ CHAGUAY ANA MA...", 220, "9:09"], ["0943308916 - ZAMBRANO ZAMBRANO A...", 226, "9:11"], ["0924478068 - BURGOS ARCENTRALES JE...", 218, "9:11"],
  ["0919692525 - LOOR ROMERO YAJAIARA J...", 226, "9:13"], ["0921044277 - VERA BERMELLO WENDY N...", 225, "9:14"], ["1205440645 - MACIAS MOLINA MARJORI...", 225, "9:15"],
  ["1311130916 - GUEVARA LARA NOHELY N...", 223, "9:17"], ["1311091605 - SABANDO LOPEZ MARIA F...", 222, "9:18"], ["1311073868 - PILAY TUBAY KATHERINE A...", 222, "9:19"], ["1714758867 - QUIROZ PONCE GLENDA F...", 222, "9:20"],
];
const lastWeek = [
  ["vlc", "Panico.en.La.Montana..2021.1080P-Dual-...", 225, "3/5/2024 10:34", 76], ["png", "Arlecchino-6634496d8f1b3f627f6149bd.p...", 223, "2/5/2024 21:25", 76],
  ["pdf", "Informe final completo-William Orrala.pdf", 223, "1/5/2024 22:22", 76], ["pdf", "UTEQ-FCI-2024-0689-M.pdf", 146, "30/4/2024 14:53", 82],
  ["pdf", "Informe final Unido.pdf", 124, "30/4/2024 14:30", 82], ["doc", "ANEXO 4 - Guia Informe.docx", 156, "30/4/2024 14:30", 82],
];

const FileRow = ({ icon, name, w, date, dw, sel }) => (
  <div className={"ml-[14px] flex h-[21px] w-[351px] shrink-0 items-center border-y border-l " + (sel ? "border-[#777]" : "border-transparent")}>
    <div className="ml-1 w-4 shrink-0">{fileIcons[icon]}</div>
    <div className="ml-1 flex w-60 shrink-0"><T w={w}>{name}</T></div>
    <T w={dw} className="text-[#ccc]">{date}</T>
  </div>
);

function FilePane() {
  return (
    <div className="flex w-[383px] shrink-0 border-l border-[#2c2c2c] bg-[#202020] text-[11.5px] text-white">
      <div className="flex w-[365px] shrink-0 flex-col overflow-hidden">
        <div className="flex h-[20px] shrink-0 items-center pt-[6px] text-[#dedede]">
          <T w={44} className="ml-[18px]">Nombre</T><div className="ml-[210px] h-6 w-px bg-[#636363]" />
          <div className="ml-[6px] w-[86px] overflow-hidden py-[3px]"><T w={91}>Fecha de modific</T></div>
        </div>
        {today.map(([n, w, t], i) => <FileRow key={i} icon={i === 8 ? "X" : "x"} name={n} w={w} date={"6/5/2024 " + t} dw={70} sel={i === 15} />)}
        <div className="flex h-[32px] shrink-0 items-center pt-px"><ChevronDown className="ml-[5px] h-[14px] w-[14px] text-[#777]" strokeWidth={1.800} /><T w={152} className="ml-[3px] text-[14.5px] text-[#e8e8e8]">La semana pasada (11)</T><div className="ml-[7px] h-px w-[177px] bg-[#343434]" /></div>
        {lastWeek.map(([ic, n, w, d, dw], i) => <FileRow key={i} icon={ic} name={n} w={w} date={d} dw={dw} />)}
        <div className="mt-px flex h-[17px] shrink-0 items-center bg-[#171717]"><ChevronLeft className="ml-[3px] h-3 w-3 text-[#888]" strokeWidth={3.500} /><div className="ml-[2px] h-[15px] w-[192px] bg-[#4d4d4d]" /><ChevronRight className="mr-[2px] ml-auto h-3 w-3 text-[#888]" strokeWidth={3.500} /></div>
      </div>
      <div className="flex w-[17px] shrink-0 flex-col items-center bg-[#171717]">
        <ChevronUp className="mt-[3px] h-3 w-3 text-[#888]" strokeWidth={3} /><div className="mt-[183px] h-[210px] w-[15px] shrink-0 bg-[#4d4d4d]" /><ChevronDown className="mt-[93px] h-3 w-3 text-[#888]" strokeWidth={3} />
        <div className="mt-auto h-[17px] w-[17px] bg-[#202020]" />
      </div>
    </div>
  );
}

function Explorer() {
  return (
    <div className="flex w-[544px] shrink-0 flex-col overflow-hidden border-r border-l-2 border-[#27404a] bg-[#191919]">
      <div className="-mb-px h-px shrink-0 bg-[#27404a]" />
      <ExplorerTop /><Ribbon /><AddressBar />
      <div className="flex h-[532px] shrink-0"><NavPane /><div className="w-[2px] shrink-0 bg-[#0f0f0f]" /><FilePane /></div>
      <div className="flex h-[24px] shrink-0 items-center bg-[#333] text-[11.5px] text-[#ccc]">
        <T w={70} className="ml-[14px]">49 elementos</T><div className="ml-[10px] h-[11px] w-px bg-[#ddd]" /><T w={130} className="ml-[10px]">1 elemento seleccionado</T><T w={42} className="ml-[7px]">1,35 MB</T><div className="ml-[10px] h-[11px] w-px bg-[#ddd]" />
        <div className="mr-1 ml-auto flex h-[22px] w-[22px] items-center justify-center border border-[#8c8c8c] bg-[#666]"><svg viewBox="0 0 16 13" className="h-[13px] w-4"><path d="M0 0h5v13H0z" fill="#eee" /><path d="M2 2h1v1H2zM2 6h1v1H2zM2 10h1v1H2z" stroke="#47b" /><path d="M7 2.500h3M11.500 2.500h3.500M7 6.500h3M11.500 6.500h3.500M7 10.500h3M11.500 10.500h3.500" stroke="#888" /></svg></div>
        <div className="mr-2">{React.cloneElement(navIcons.img, { className: "h-[11px] w-[14px]" })}</div>
      </div>
    </div>
  );
}

/* ---------- taskbar ---------- */

const taskSlot = "flex h-[30px] w-[28px] shrink-0 items-center justify-center border-b-2 ";

function Taskbar() {
  return (
    <div className="flex h-[30px] shrink-0 items-center bg-[#1b1d20] text-[11.5px] text-white">
      <svg viewBox="0 0 16 16" className="ml-[10px] h-4 w-4" fill="#fff"><path d="M0 2.300L6.600 1.400v6.200H0zM7.400 1.300L16 0v7.600H7.400zM0 8.400h6.600v6.200L0 13.700zM7.400 8.400H16V16l-8.600-1.200z" /></svg>
      <svg viewBox="0 0 16 16" className="ml-5 h-4 w-4" fill="none" stroke="#fff" strokeWidth="1.500"><circle cx="9.800" cy="6.200" r="5.200" /><path d="M6 10l-5.400 5.400" /></svg>
      <div className="ml-[13px] flex h-[30px] w-[33px] items-center justify-center border-b-2 border-[#e96bdc] bg-[#48494b]">
        <svg viewBox="0 0 16 14" className="h-[14px] w-4"><path d="M0 0h6l1 2h9v12H0z" fill="#e8a823" /><path d="M0 4h16v10H0z" fill="#ffd765" /><path d="M3 9h10v5h-2.500v-2.500h-5V14H3z" fill="#2f8fdd" /></svg>
      </div>
      <div className="h-[30px] w-[3px] border-b-2 border-[#a04c99] bg-[#36373a]" />
      <svg viewBox="0 0 16 16" className="ml-[11px] h-4 w-4"><path d="M5 3V.8h6V3" fill="none" stroke="#eee" strokeWidth="1.200" /><rect y="3" width="16" height="13" rx="1.500" fill="#f5f5f5" /><path d="M4 5.500h3.500V9H4z" fill="#e6502a" /><path d="M8.500 5.500H12V9H8.500z" fill="#7cb82f" /><path d="M4 10h3.500v3.500H4z" fill="#199fd9" /><path d="M8.500 10H12v3.500H8.500z" fill="#f2b216" /></svg>
      <div className={taskSlot + "ml-[15px] border-[#e96bdc]"}>
        <svg viewBox="0 0 16 16" className="h-4 w-4"><circle cx="8" cy="8" r="8" fill="#1573c5" /><path d="M.2 7A8 8 0 0 1 16 7.500q0 3.500-4 3.500-3 0-2-2 .5-3-3-3.500Q2 5 .2 7z" fill="#42cf9d" /><path d="M.2 7Q3 3 8 6 5 7 5.500 10q1 4 6 5Q6 17 2 13 0 10 .2 7z" fill="#1b9be0" /><path d="M8 6.500q-2 2 0 5 3 2.500 7 .5-2 3-4 3.200Q5 14 5.500 9.500 6 7 8 6.500z" fill="#0d4f9c" /></svg>
      </div>
      <div className={taskSlot + "ml-[9px] border-[#e96bdc]"}>
        <svg viewBox="0 0 16 16" className="h-4 w-4"><circle cx="8" cy="8" r="8" fill="#fbc116" /><path d="M1.070 4A8 8 0 0 1 14.930 4H8L4.540 10z" fill="#e33b2e" /><path d="M1.070 4A8 8 0 0 0 8 16L11.460 10H4.540z" fill="#2da94f" /><circle cx="8" cy="8" r="4" fill="#fff" /><circle cx="8" cy="8" r="3.100" fill="#4285f4" /></svg>
      </div>
      <svg viewBox="0 0 16 16" className="ml-[15px] h-4 w-4" fill="none" stroke="#a8193d"><circle cx="8" cy="8" r="7.200" strokeWidth="1.300" /><ellipse cx="8" cy="8" rx="3.400" ry="6" strokeWidth="1.300" /></svg>
      <div className={taskSlot + "ml-[15px] border-[#e96bdc]"}>
        <svg viewBox="0 0 16 16" className="h-4 w-4"><path d="M8 16A7.600 7.600 0 0 1 .5 7Q1 3.500 3 2l1 2h2l3-4q1 2 3 3l1-1q3 3 3 6.500A7.600 7.600 0 0 1 8 16z" fill="#ff6a2b" /><path d="M9 0q0 3 3 5 3 3 1 7 3-2 3-5Q15 4 12 3 10 2 9 0z" fill="#ffd83f" /><circle cx="7.500" cy="8.500" r="3.700" fill="#7e4de0" /><path d="M1 7q3-3 7-.5L5 8q0 3 4 4-4 3-7-1z" fill="#ff9b31" /></svg>
      </div>
      <div className={taskSlot + "ml-[9px] border-[#e96bdc]"}><Gear className="h-[13px] w-[13px]" /></div>
      <ChevronUp className="ml-[818px] h-[15px] w-[15px] shrink-0" strokeWidth={2} />
      <svg viewBox="0 0 17 13" className="ml-2 h-[13px] w-[17px] shrink-0" fill="none" stroke="#ddd"><path d="M1.500 1v3M4.500 1v3M.5 4h5v2L3 7.500.5 6zM3 8v4.500M7 3.500h8.500v8H5" /><path d="M7.500 5.500l4 4M11.500 5.500l-4 4" strokeWidth="1.400" stroke="#fff" /></svg>
      <svg viewBox="0 0 13 13" className="ml-[9px] h-[13px] w-[13px] shrink-0" fill="none" stroke="#ddd" strokeWidth="1.200"><path d="M1 12.500Q1 1 12.500 1M4 12.500Q4 4 12.500 4M7 12.500Q7 7 12.500 7" /><circle cx="11" cy="11" r="1.500" fill="#fff" /></svg>
      <svg viewBox="0 0 15 12" className="ml-2 h-3 w-[15px] shrink-0" fill="none" stroke="#fff"><path d="M.5 4v4h2.500L7 11.500V.5L3 4zM9.500 4l4 4M13.500 4l-4 4" strokeWidth="1.200" /></svg>
      <T w={18} className="ml-[13px]">ESP</T><T w={22} className="ml-[19px]">9:22</T>
      <svg viewBox="0 0 16 16" className="ml-[20px] h-4 w-4 shrink-0"><path d="M0 0h16v12.500h-6L8 16l-1-3.500H0z" fill="#fff" /><path d="M3 3.500h10M3 6.500h10M3 9.500h7" stroke="#1b1d20" /></svg>
      <div className="ml-auto h-[30px] w-[5px] border-l border-[#555]" />
    </div>
  );
}

export default function App() {
  return (
    <div className="flex h-[768px] w-[1366px] flex-col overflow-hidden bg-[#191919] font-['Open_Sans','Noto_Sans',sans-serif] leading-none">
      <div className="flex h-[738px] shrink-0"><Browser /><Explorer /></div>
      <Taskbar />
    </div>
  );
}
